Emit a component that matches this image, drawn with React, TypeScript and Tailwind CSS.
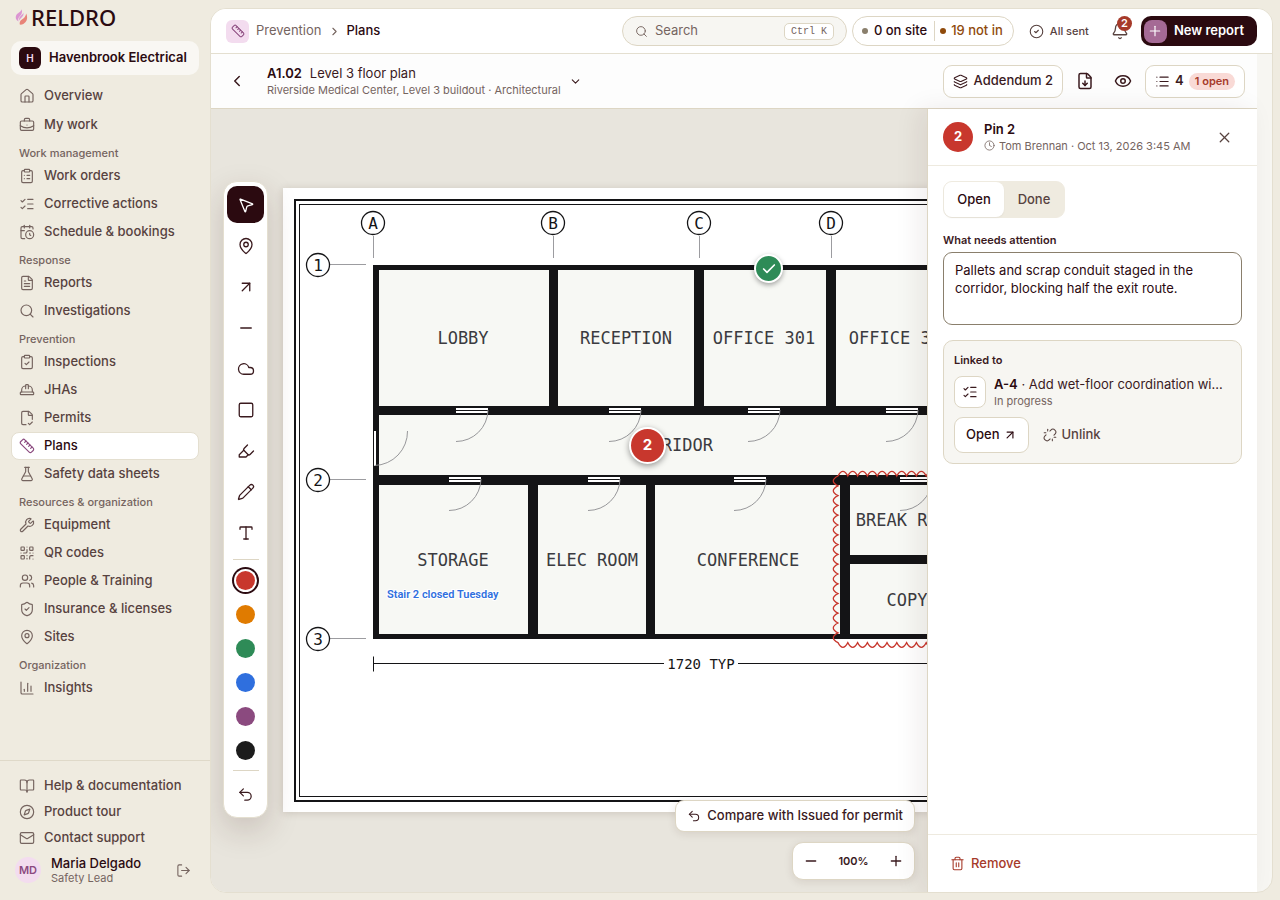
import React, { useState } from 'react';
import {
  House, BriefcaseBusiness, ClipboardList, ListChecks, CalendarClock, FileText, Search, ClipboardCheck, HardHat,
  FileCheck2, Ruler, FlaskConical, Wrench, QrCode, Users, ShieldCheck, MapPin, ChartColumn, BookOpen, Compass, Mail,
  LogOut, ChevronRight, ChevronLeft, ChevronDown, CircleCheck, Bell, Plus, Minus, Layers, FileDown, Eye, List, Clock, X,
  MousePointer2, ArrowUpRight, Cloud, Square, Highlighter, Pencil, Type, Undo2, Check, Unlink, Trash2,
} from 'lucide-react';

const topLinks = [
  { label: 'Overview', icon: House },
  { label: 'My work', icon: BriefcaseBusiness },
];

const navGroups = [
  {
    title: 'Work management',
    items: [
      { label: 'Work orders', icon: ClipboardList },
      { label: 'Corrective actions', icon: ListChecks },
      { label: 'Schedule & bookings', icon: CalendarClock },
    ],
  },
  {
    title: 'Response',
    items: [
      { label: 'Reports', icon: FileText },
      { label: 'Investigations', icon: Search },
    ],
  },
  {
    title: 'Prevention',
    items: [
      { label: 'Inspections', icon: ClipboardCheck },
      { label: 'JHAs', icon: HardHat },
      { label: 'Permits', icon: FileCheck2 },
      { label: 'Plans', icon: Ruler },
      { label: 'Safety data sheets', icon: FlaskConical },
    ],
  },
  {
    title: 'Resources & organization',
    items: [
      { label: 'Equipment', icon: Wrench },
      { label: 'QR codes', icon: QrCode },
      { label: 'People & Training', icon: Users },
      { label: 'Insurance & licenses', icon: ShieldCheck },
      { label: 'Sites', icon: MapPin },
    ],
  },
  {
    title: 'Organization',
    items: [{ label: 'Insights', icon: ChartColumn }],
  },
];

const helpLinks = [
  { label: 'Help & documentation', icon: BookOpen },
  { label: 'Product tour', icon: Compass },
  { label: 'Contact support', icon: Mail },
];

const tools = [
  { name: 'Select', icon: MousePointer2 },
  { name: 'Pin', icon: MapPin },
  { name: 'Arrow', icon: ArrowUpRight },
  { name: 'Line', icon: Minus },
  { name: 'Cloud', icon: Cloud },
  { name: 'Rectangle', icon: Square },
  { name: 'Highlighter', icon: Highlighter },
  { name: 'Pen', icon: Pencil },
  { name: 'Text', icon: Type },
];

const swatches = [
  { name: 'Red', bg: 'bg-[#c8372d]' },
  { name: 'Orange', bg: 'bg-[#e07b00]' },
  { name: 'Green', bg: 'bg-[#2e8b57]' },
  { name: 'Blue', bg: 'bg-[#2f6fde]' },
  { name: 'Purple', bg: 'bg-[#8b4a7f]' },
  { name: 'Black', bg: 'bg-[#1c1c1c]' },
];

// --- FLOOR PLAN DATA (sheet units) ---
const rooms = [
  { x: 96, y: 82, w: 170, h: 136, label: 'LOBBY', cx: 180, base: 156 },
  { x: 275, y: 82, w: 136, h: 136, label: 'RECEPTION', cx: 343, base: 156 },
  { x: 421, y: 82, w: 122, h: 136, label: 'OFFICE 301', cx: 481, base: 156 },
  { x: 553, y: 82, w: 128, h: 136, label: 'OFFICE 302', cx: 617, base: 156 },
  { x: 96, y: 227, w: 646, h: 60, label: 'CORRIDOR', cx: 389, base: 263 },
  { x: 96, y: 297, w: 149, h: 149, label: 'STORAGE', cx: 170, base: 378 },
  { x: 255, y: 297, w: 108, h: 149, label: 'ELEC ROOM', cx: 309, base: 378 },
  { x: 372, y: 297, w: 185, h: 149, label: 'CONFERENCE', cx: 465, base: 378 },
  { x: 567, y: 297, w: 114, h: 70, label: 'BREAK ROOM', cx: 624, base: 338 },
  { x: 567, y: 376, w: 114, h: 70, label: 'COPY', cx: 624, base: 418 },
];

const doors = [
  { x: 173, y: 220 }, { x: 326, y: 220 }, { x: 465, y: 220 }, { x: 603, y: 220 },
  { x: 166, y: 289 }, { x: 305, y: 289 }, { x: 451, y: 289 }, { x: 617, y: 289 },
];

const columnMarks = [
  { label: 'A', x: 90 }, { label: 'B', x: 270 }, { label: 'C', x: 416 }, { label: 'D', x: 548 },
];

const rowMarks = [
  { label: '1', y: 77 }, { label: '2', y: 292 }, { label: '3', y: 451 },
];

const revisionCloud =
  'M555 288' +
  ' q4.9 -9.4 9.8 0'.repeat(14) +
  ' q9.4 4.9 0 9.8'.repeat(17) +
  ' q-4.9 9.4 -9.8 0'.repeat(14) +
  ' q-9.4 -4.9 0 -9.8'.repeat(17);

function NavLink({ label, icon: Icon, active = false }: { label: string; icon: any; active?: boolean }) {
  return (
    <a
      href="#"
      aria-current={active ? 'page' : undefined}
      className={`flex h-7 items-center gap-2 rounded-lg border px-[7px] font-medium ${active ? 'border-[#e4dfd0] bg-white text-[#2b0a10]' : 'border-transparent text-[#57423f]'}`}
    >
      <Icon size={16} strokeWidth={1.75} className={active ? 'text-[#8b4a7f]' : 'text-[#75645f]'} />
      <span className="pl-px">{label}</span>
    </a>
  );
}

function Sidebar() {
  return (
    <nav className="flex w-[210px] shrink-0 flex-col text-[13px]">
      <div className="flex h-9 items-center gap-[3px] pb-0.5 pl-[15px]">
        <svg width="13" height="18" viewBox="0 0 13 18" aria-hidden="true">
          <path d="M6.6 1.2C7.6 4.4 6.8 6.3 4.8 8.2C3.2 9.8 2.8 11.2 3.6 13.6C0.9 12 0 9.6 1.2 7.2C2.3 5 5.8 4.3 6.6 1.2Z" fill="#dc95d2" />
          <path d="M11.2 5.4C12.6 8.4 12.5 11.6 10.6 14C9.2 15.8 7 16.9 4.8 16.6C4.4 14.4 4.9 13 6.9 11.6C9 10.1 10.7 8.4 11.2 5.4Z" fill="#e88378" />
          <path d="M8.4 4.6C8.8 7 8 8.4 6.4 9.7C5.2 10.7 4.6 11.6 4.7 12.8C3.7 11 4 9.6 5.4 8.2C6.7 7 8 6.4 8.4 4.6Z" fill="#dc95d2" />
        </svg>
        <span className="font-['Noto_Sans',sans-serif] text-[22px] leading-none font-medium text-[#2b0a10]">RELDRO</span>
      </div>

      <div className="px-[11px] pt-[5px]">
        <button className="flex h-[34px] w-full items-center gap-2 rounded-[10px] bg-[#f9f7f3] px-2 text-left font-semibold text-[#2b0a10]">
          <span className="flex size-[22px] shrink-0 items-center justify-center rounded-md bg-[#2b0a10] text-[10px] text-[#f3dcef]">H</span>
          Havenbrook Electrical
        </button>
      </div>

      <div className="flex-1 px-[11px] pt-[7px]">
        <div className="flex flex-col gap-px">
          {topLinks.map((item) => <NavLink key={item.label} {...item} />)}
        </div>
        {navGroups.map((group) => (
          <div key={group.title}>
            <h2 className="px-2 pt-1.5 pb-px text-[11px] leading-4 font-medium text-[#75645f]">{group.title}</h2>
            {group.items.map((item) => <NavLink key={item.label} {...item} active={item.label === 'Plans'} />)}
          </div>
        ))}
      </div>

      <div className="border-t border-[#dfd9c9] px-[11px] pt-3 pb-[15px]">
        {helpLinks.map(({ label, icon: Icon }) => (
          <a key={label} href="#" className="flex h-[26px] items-center gap-2 px-2 font-medium text-[#57423f]">
            <Icon size={16} strokeWidth={1.75} className="text-[#75645f]" />
            <span className="pl-px">{label}</span>
          </a>
        ))}
        <div className="flex items-center gap-2.5 pt-1 pl-1">
          <span className="flex size-[26px] items-center justify-center rounded-full bg-[#f3dcef] text-[11px] font-semibold text-[#8b4a7f]">MD</span>
          <div className="flex-1">
            <div className="text-[13px] leading-4 font-medium text-[#2b0a10]">Maria Delgado</div>
            <div className="text-[11px] leading-[14px] text-[#75645f]">Safety Lead</div>
          </div>
          <button aria-label="Sign out" className="px-2 text-[#75645f]"><LogOut size={15} strokeWidth={1.75} /></button>
        </div>
      </div>
    </nav>
  );
}

function TopBar() {
  return (
    <header className="flex h-[45px] shrink-0 items-center border-b border-[#e4dfd0] bg-white px-[15px] text-[13px]">
      <span className="flex size-[23px] items-center justify-center rounded-md bg-[#f3dcef] text-[#8b4a7f]"><Ruler size={14} strokeWidth={1.75} /></span>
      <a href="#" className="pl-[7px] text-[#75645f]">Prevention</a>
      <ChevronRight size={13} strokeWidth={2} className="mx-1.5 text-[#75645f]" />
      <span className="font-medium text-[#2b0a10]">Plans</span>

      <div className="ml-auto flex items-center">
        <label className="flex h-[30px] w-[225px] items-center rounded-full border border-[#ddd6c4] bg-[#f7f6f2] px-3 text-[#75645f]">
          <Search size={13} strokeWidth={1.75} className="shrink-0" />
          <input type="search" aria-label="Search" placeholder="Search" className="ml-[7px] w-0 flex-1 bg-transparent outline-none placeholder:text-[#75645f]" />
          <kbd className="rounded-[5px] border border-[#ddd6c4] bg-white px-1.5 font-['Liberation_Mono',monospace] text-[10px] leading-[15px]">Ctrl K</kbd>
        </label>
        <button className="ml-[5px] flex h-[30px] items-center rounded-full border border-[#ddd6c4] bg-white pr-2.5 pl-[9px] font-medium">
          <span className="size-1.5 rounded-full bg-[#8a7f6c]" />
          <span className="pl-1.5 text-[#2b0a10]">0 on site</span>
          <span className="mr-[5px] ml-[7px] h-5 w-px bg-[#ddd6c4]" />
          <span className="size-1.5 rounded-full bg-[#8f4a0b]" />
          <span className="pl-[5px] text-[#8f4a0b]">19 not in</span>
        </button>
        <span className="ml-[15px] flex items-center gap-1.5 text-[11px] font-medium text-[#57423f]">
          <CircleCheck size={15} strokeWidth={1.75} />
          All sent
        </span>
        <button aria-label="Notifications" className="relative mr-3 ml-[22px] text-[#57423f]">
          <Bell size={18} strokeWidth={1.75} />
          <span className="absolute -top-1.5 left-1.5 flex size-[15px] items-center justify-center rounded-full bg-[#a63a2a] text-[11px] font-semibold text-white">2</span>
        </button>
        <button className="flex h-[30px] items-center gap-[7px] rounded-[10px] bg-[#2b0a10] pr-[13px] pl-[3px] font-semibold text-white">
          <span className="flex size-[23px] items-center justify-center rounded-lg bg-[#a56a95]"><Plus size={16} strokeWidth={1.75} /></span>
          New report
        </button>
      </div>
    </header>
  );
}

function SheetHeader() {
  return (
    <div className="flex h-[55px] shrink-0 items-center border-b border-[#ddd6c4] bg-[#fdfdfd] pr-3 pl-[17px] text-[#3a1a1e]">
      <button aria-label="Back to plans"><ChevronLeft size={18} strokeWidth={2} /></button>
      <button className="ml-[21px] flex items-center gap-2 text-left">
        <span>
          <span className="flex gap-2 text-[13px] leading-[18px]">
            <b className="font-semibold text-[#2b0a10]">A1.02</b>
            <span>Level 3 floor plan</span>
          </span>
          <span className="block text-[11px] leading-4 text-[#75645f]">Riverside Medical Center, Level 3 buildout · Architectural</span>
        </span>
        <ChevronDown size={13} strokeWidth={2} />
      </button>
      <div className="ml-auto flex items-center text-[13px] font-medium">
        <button className="flex h-[33px] items-center gap-1.5 rounded-[9px] border border-[#ddd6c4] bg-white px-[9px]">
          <Layers size={15} strokeWidth={1.75} />
          Addendum 2
        </button>
        <button aria-label="Download sheet" className="ml-[13px]"><FileDown size={18} strokeWidth={2} /></button>
        <button aria-label="Show markups" className="mx-[13px] ml-5"><Eye size={18} strokeWidth={2} /></button>
        <button className="flex h-[33px] items-center rounded-[9px] border border-[#ddd6c4] bg-white px-[9px] font-semibold">
          <List size={15} strokeWidth={1.75} />
          <span className="pl-[5px]">4</span>
          <span className="ml-[5px] rounded-full bg-[#f9dad6] px-1.5 text-[11px] leading-[17px] text-[#a63a2a]">1 open</span>
        </button>
      </div>
    </div>
  );
}

function PlanDrawing() {
  return (
    <svg width="902" height="624" viewBox="0 0 902 624" role="img" aria-label="Level 3 floor plan" className="block bg-white font-['DejaVu_Sans_Mono',monospace]">
      <rect x="12" y="12" width="878" height="601" fill="none" stroke="#141416" strokeWidth="2" />
      <rect x="16.5" y="16.5" width="869" height="592" fill="none" stroke="#141416" />

      {columnMarks.map((m) => (
        <g key={m.label}>
          <path d={`M${m.x + 0.5} 48V70`} stroke="#9c9ca0" />
          <circle cx={m.x} cy="35" r="11.5" fill="#fff" stroke="#141416" strokeWidth="1.3" />
          <text x={m.x} y="41" textAnchor="middle" fontSize="16" fill="#141416">{m.label}</text>
        </g>
      ))}
      {rowMarks.map((m) => (
        <g key={m.label}>
          <path d={`M47 ${m.y - 0.5}H83`} stroke="#9c9ca0" />
          <circle cx="35" cy={m.y} r="11.5" fill="#fff" stroke="#141416" strokeWidth="1.3" />
          <text x="35" y={m.y + 6} textAnchor="middle" fontSize="16" fill="#141416">{m.label}</text>
        </g>
      ))}

      {/* walls are one dark slab, rooms are cut out of it */}
      <rect x="90" y="77" width="657" height="374" fill="#141416" />
      {rooms.map((r) => (
        <rect key={r.label} x={r.x} y={r.y} width={r.w} height={r.h} fill="#f7f8f4" />
      ))}

      {doors.map((d) => (
        <g key={`${d.x}-${d.y}`}>
          <rect x={d.x} y={d.y} width="32" height="5" fill="#fff" />
          <path d={`M${d.x} ${d.y + 2.5}h32`} stroke="#141416" />
          <path d={`M${d.x + 32} ${d.y + 2}a32 32 0 0 1 -32 31.5`} fill="none" stroke="#8c8c90" strokeWidth="0.9" />
        </g>
      ))}
      <rect x="91" y="243" width="2" height="35" fill="#fff" />
      <path d="M124.5 243a34 34 0 0 1 -33 34.5" fill="none" stroke="#8c8c90" strokeWidth="0.9" />

      {rooms.map((r) => (
        <text key={r.label} x={r.cx} y={r.base} textAnchor="middle" fontSize="17" fill="#3b3b40">{r.label}</text>
      ))}

      <path d="M90.5 468.500v15M90.5 475.500H381M455 475.500H747M747.500 468.500v15" stroke="#141416" />
      <text x="418" y="481" textAnchor="middle" fontSize="14" fill="#141416">1720 TYP</text>

      {/* markups */}
      <path d={revisionCloud} fill="none" stroke="#c8372d" strokeWidth="1.3" />
      <text x="104" y="410" fontSize="11" fill="#2f6fde" stroke="#fff" strokeWidth="2" paintOrder="stroke" className="font-['Roboto',sans-serif] font-semibold">Stair 2 closed Tuesday</text>
    </svg>
  );
}

function ToolRail() {
  const [tool, setTool] = useState('Select');
  const [color, setColor] = useState('Red');

  return (
    <div className="absolute inset-y-0 left-3 flex items-center pb-0.5">
      <div className="flex w-[45px] flex-col items-center rounded-[14px] border border-[#e4dfd0] bg-white py-1 text-[#3a1a1e] shadow-[0_12px_32px_rgba(60,30,20,0.18)]">
        <div className="flex w-full flex-col items-center gap-1">
          {tools.map(({ name, icon: Icon }) => (
            <button
              key={name}
              aria-label={name}
              onClick={() => setTool(name)}
              className={`flex h-[37px] w-[37px] items-center justify-center rounded-[10px] ${tool === name ? 'bg-[#2b0a10] text-white' : ''}`}
            >
              <Icon size={18} strokeWidth={1.75} />
            </button>
          ))}
        </div>
        <div className="mt-2 mb-[3px] h-px w-[26px] bg-[#ddd6c4]" />
        {swatches.map((s) => (
          <button key={s.name} aria-label={s.name} onClick={() => setColor(s.name)} className="flex size-[34px] items-center justify-center">
            <span className={`size-[19px] rounded-full ${s.bg} ${color === s.name ? 'ring-2 ring-[#2b0a10] ring-offset-2' : ''}`} />
          </button>
        ))}
        <div className="mt-[3px] mb-[5px] h-px w-[26px] bg-[#ddd6c4]" />
        <button aria-label="Undo" className="flex h-[37px] w-[37px] items-center justify-center"><Undo2 size={17} strokeWidth={1.75} /></button>
      </div>
    </div>
  );
}

function Canvas() {
  return (
    <section className="relative flex min-w-0 flex-1 items-center overflow-hidden bg-[#e8e5dd] pb-px pl-[72px]">
      <div className="relative shrink-0 shadow-[0_1px_8px_rgba(60,40,20,0.16)]">
        <PlanDrawing />
        <button aria-label="Pin 1, done" className="absolute top-[66px] left-[471px] flex size-[29px] items-center justify-center rounded-full border-2 border-white bg-[#2e8b57] text-white shadow-[0_2px_5px_rgba(0,0,0,0.35)]">
          <Check size={16} strokeWidth={2.5} />
        </button>
        <button aria-label="Pin 2, open" className="absolute top-[239px] left-[346px] flex size-[37px] items-center justify-center rounded-full border-2 border-white bg-[#c8372d] text-[15px] font-bold text-white shadow-[0_2px_6px_rgba(0,0,0,0.4)]">
          2
        </button>
      </div>

      <ToolRail />

      <div className="absolute right-3 bottom-3 flex flex-col items-end gap-2.5 text-[13px] font-medium text-[#3a1a1e]">
        <button className="flex h-8 items-center gap-1.5 rounded-[9px] border border-[#ddd6c4] bg-white px-[11px] shadow-[0_2px_8px_rgba(60,30,20,0.1)]">
          <Undo2 size={14} strokeWidth={1.75} />
          Compare with Issued for permit
        </button>
        <div className="flex h-[38px] w-[123px] items-center justify-between rounded-[11px] border border-[#ddd6c4] bg-white px-2.5 shadow-[0_2px_8px_rgba(60,30,20,0.1)]">
          <button aria-label="Zoom out"><Minus size={16} strokeWidth={2} /></button>
          <span className="text-[11px] font-semibold">100%</span>
          <button aria-label="Zoom in"><Plus size={16} strokeWidth={2} /></button>
        </div>
      </div>
    </section>
  );
}

function PinPanel() {
  const [status, setStatus] = useState<'open' | 'done'>('open');
  const [note, setNote] = useState('Pallets and scrap conduit staged in the corridor, blocking half the exit route.');

  return (
    <aside className="relative flex w-[330px] shrink-0 flex-col border-l border-[#ddd6c4] bg-white text-[13px] text-[#3a1a1e] shadow-[-8px_0_24px_rgba(60,30,20,0.08)]">
      <div className="flex h-[57px] items-center border-b border-[#eeeadf] px-[15px]">
        <span className="flex size-[30px] items-center justify-center rounded-full bg-[#c8372d] font-bold text-white">2</span>
        <div className="flex-1 pl-[11px]">
          <h1 className="leading-[17px] font-semibold text-[#2b0a10]">Pin 2</h1>
          <p className="flex items-center gap-1 text-[11px] leading-4 text-[#75645f]">
            <Clock size={11} strokeWidth={1.75} />
            Tom Brennan · Oct 13, 2026 3:45 AM
          </p>
        </div>
        <button aria-label="Close" className="px-[9px] text-[#57423f]"><X size={17} strokeWidth={1.75} /></button>
      </div>

      <div className="flex-1 p-[15px]">
        <div className="inline-flex h-[37px] rounded-[9px] border border-[#efebe0] bg-[#efebe0] align-top font-medium">
          <button onClick={() => setStatus('open')} className={`w-[60px] rounded-lg ${status === 'open' ? 'bg-white text-[#2b0a10] shadow-xs' : 'text-[#57423f]'}`}>Open</button>
          <button onClick={() => setStatus('done')} className={`w-[60px] rounded-lg ${status === 'done' ? 'bg-white text-[#2b0a10] shadow-xs' : 'text-[#57423f]'}`}>Done</button>
        </div>

        <label htmlFor="note" className="mt-3.5 mb-1 block text-[11px] leading-4 font-semibold">What needs attention</label>
        <textarea
          id="note"
          value={note}
          onChange={(e) => setNote(e.target.value)}
          className="block h-[73px] w-full resize-none rounded-[9px] border border-[#8a7f6c] px-[11px] py-2 leading-[18px] text-[#2b0a10] outline-none"
        />

        <div className="mt-[15px] rounded-[10px] border border-[#ddd6c4] bg-[#f7f6f2] px-2.5 pt-[11px] pb-2.5">
          <h2 className="text-[11px] leading-4 font-semibold">Linked to</h2>
          <div className="mt-[7px] flex items-center gap-2">
            <span className="flex size-8 shrink-0 items-center justify-center rounded-lg border border-[#ddd6c4] bg-white"><ListChecks size={16} strokeWidth={1.75} /></span>
            <div className="min-w-0 flex-1 pr-[5px]">
              <p className="truncate leading-[18px]"><b className="font-semibold text-[#2b0a10]">A-4</b> · Add wet-floor coordination with night crew</p>
              <p className="text-[11px] leading-4 text-[#75645f]">In progress</p>
            </div>
          </div>
          <div className="mt-2 flex items-center gap-3.5 font-medium">
            <button className="flex h-9 items-center gap-1 rounded-[9px] border border-[#ddd6c4] bg-white px-[11px] text-[#2b0a10]">
              Open
              <ArrowUpRight size={14} strokeWidth={2} />
            </button>
            <button className="flex h-9 items-center gap-1 text-[#57423f]">
              <Unlink size={14} strokeWidth={1.75} />
              Unlink
            </button>
          </div>
        </div>
      </div>

      <div className="flex h-[58px] items-center border-t border-[#eeeadf] px-[22px]">
        <button className="flex items-center gap-1.5 font-medium text-[#a63a2a]">
          <Trash2 size={15} strokeWidth={1.75} />
          Remove
        </button>
      </div>
    </aside>
  );
}

export default function App() {
  return (
    <div className="flex h-screen overflow-hidden bg-[#efebe0] font-['Inter',sans-serif]">
      <Sidebar />
      <main className="mt-2 mr-[7px] mb-[7px] flex min-w-0 flex-1 flex-col overflow-hidden rounded-2xl border border-[#e4dfd0] bg-[#f7f6f2]">
        <TopBar />
        <div className="mr-[15px] flex min-h-0 flex-1 flex-col">
          <SheetHeader />
          <div className="flex min-h-0 flex-1">
            <Canvas />
            <PinPanel />
          </div>
        </div>
      </main>
    </div>
  );
}
